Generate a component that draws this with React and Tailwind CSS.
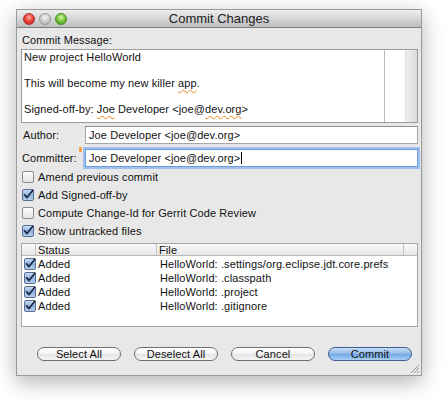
import React from "react";

function Check({ checked }) {
  return (
    <svg width="12" height="12" viewBox="0 0 12 12" className="shrink-0">
      <defs>
        <linearGradient id="cbw" x1="0" y1="0" x2="0" y2="1">
          <stop offset="0" stopColor="#ffffff" />
          <stop offset="1" stopColor="#e4e4e4" />
        </linearGradient>
        <linearGradient id="cbb" x1="0" y1="0" x2="0" y2="1">
          <stop offset="0" stopColor="#cfe0f5" />
          <stop offset="0.5" stopColor="#8fb2e0" />
          <stop offset="1" stopColor="#b7d0f0" />
        </linearGradient>
      </defs>
      <rect x="0.5" y="0.5" width="11" height="11" rx="1.5" fill={checked ? "url(#cbb)" : "url(#cbw)"} stroke={checked ? "#5a6f8e" : "#8a8a8a"} />
      {checked && (
        <path d="M2.6 5.8 L5 8.6 L10.8 1.2" fill="none" stroke="#1b2740" strokeWidth="1.7" strokeLinecap="round" strokeLinejoin="round" />
      )}
    </svg>
  );
}

function Button({ children, primary }) {
  return (
    <div
      className={
        "w-[84px] h-[14px] rounded-full border flex items-center justify-center text-[11px] leading-none text-[#111] " +
        (primary
          ? "border-[#3f5f93] bg-[linear-gradient(to_bottom,#c9def6_0%,#8db8ea_50%,#6fa5e4_51%,#a9d0f6_100%)]"
          : "border-[#6e6e6e] bg-[linear-gradient(to_bottom,#ffffff_0%,#f3f3f3_50%,#e4e4e4_51%,#f6f6f6_100%)]")
      }
    >
      {children}
    </div>
  );
}

export default function App() {
  const rows = [
    "HelloWorld: .settings/org.eclipse.jdt.core.prefs",
    "HelloWorld: .classpath",
    "HelloWorld: .project",
    "HelloWorld: .gitignore",
  ];
  const squig = "underline decoration-wavy decoration-[#e8851c] decoration-1 underline-offset-2";
  return (
    <div className="w-[446px] h-[401px] bg-white pt-[9px] pl-[16px] font-['Liberation_Sans',Arial,sans-serif] text-[11px] text-[#111] tracking-[0.1px]">
      <div className="w-[406px] h-[367px] bg-[#e8e8e8] flex flex-col shadow-[0_6px_20px_rgba(0,0,0,0.3)] border border-[#9a9a9a] relative">
        {/* title bar */}
        <div className="h-[18px] shrink-0 relative flex items-center justify-center bg-[linear-gradient(to_bottom,#eeeeee_0%,#d6d6d6_50%,#bdbdbd_100%)] border-b border-[#7e7e7e]">
          <div className="absolute left-[6px] top-[3px] flex gap-[4px]">
            <span className="w-[12px] h-[12px] rounded-full border border-[#a33] bg-[radial-gradient(circle_at_50%_35%,#ffb0a8_0%,#f0463c_45%,#b81c18_100%)]" />
            <span className="w-[12px] h-[12px] rounded-full border border-[#9a9a9a] bg-[radial-gradient(circle_at_50%_35%,#f4f4f4_0%,#cfcfcf_50%,#a8a8a8_100%)]" />
            <span className="w-[12px] h-[12px] rounded-full border border-[#4d8a2a] bg-[radial-gradient(circle_at_50%_35%,#d8f5b0_0%,#7ccb3c_45%,#3f8a18_100%)]" />
          </div>
          <span className="text-[13px] text-[#222] leading-none tracking-normal">Commit Changes</span>
        </div>

        <div className="flex-1 flex flex-col pl-[4px] pr-[3px]">
          <div className="h-[21px] flex items-center pl-[1px] pt-[3px]">Commit Message:</div>
          {/* text area */}
          <div className="h-[74px] bg-white border border-[#9c9c9c] flex">
            <div className="flex-1 pl-[2px] pt-[1px] leading-[13px]">
              <div>New project HelloWorld</div>
              <div>&nbsp;</div>
              <div>This will become my new killer <span className={squig}>app</span>.</div>
              <div>&nbsp;</div>
              <div>
                Signed-off-by: <span className={squig}>Joe</span> Developer &lt;joe@<span className={squig}>dev.org</span>&gt;
              </div>
            </div>
            <div className="w-[33px] border-l border-[#bdbdbd] flex justify-end">
              <div className="w-[12px] h-full bg-[linear-gradient(to_right,#eeeeee,#dcdcdc)] border-l border-[#e0e0e0]" />
            </div>
          </div>

          {/* author */}
          <div className="mt-[3px] flex items-center h-[18px]">
            <div className="w-[64px] pl-[2px]">Author:</div>
            <div className="flex-1 h-[18px] bg-white border border-[#a6a6a6] border-t-[#8c8c8c] flex items-center pl-[3px]">
              Joe Developer &lt;joe@dev.org&gt;
            </div>
          </div>
          <div className="mt-[5px] flex items-center h-[18px]">
            <div className="w-[64px] pl-[1px] relative">
              Committer:
              <span className="absolute left-[58px] -top-[3px] w-[3px] h-[5px] bg-[#f0a040] rounded-[1px]" />
            </div>
            <div className="flex-1 h-[18px] bg-white border border-[#6f9bd8] shadow-[0_0_0_2px_#9dc1ee] flex items-center pl-[3px]">
              Joe Developer &lt;joe@dev.org&gt;<span className="inline-block w-px h-[12px] bg-black ml-[1px]" />
            </div>
          </div>

          {/* checkboxes */}
          <div className="mt-[1px] flex flex-col pl-[1px]">
            {[
              ["Amend previous commit", false],
              ["Add Signed-off-by", true],
              ["Compute Change-Id for Gerrit Code Review", false],
              ["Show untracked files", true],
            ].map(([t, c]) => (
              <div key={t} className="h-[18px] flex items-center gap-[4px]">
                <Check checked={c} />
                <span>{t}</span>
              </div>
            ))}
          </div>

          {/* table */}
          <div className="mt-[3px] h-[84px] bg-white border border-[#a6a6a6] flex flex-col">
            <div className="h-[12px] flex bg-[linear-gradient(to_bottom,#fafafa,#e6e6e6)] border-b border-[#b8b8b8] leading-[12px]">
              <div className="w-[14px] border-r border-[#c4c4c4]" />
              <div className="w-[121px] border-r border-[#c4c4c4] pl-[2px]">Status</div>
              <div className="w-[247px] border-r border-[#c4c4c4] pl-[2px]">File</div>
              <div className="flex-1" />
            </div>
            <div className="pt-[1px]">
              {rows.map((f) => (
                <div key={f} className="h-[14px] flex items-center">
                  <div className="w-[15px] pl-[2px] flex items-center">
                    <Check checked />
                  </div>
                  <div className="w-[121px] pl-[1px]">Added</div>
                  <div className="pl-[2px]">{f}</div>
                </div>
              ))}
            </div>
          </div>

          {/* buttons */}
          <div className="mt-[20px] flex pl-[16px] gap-[13px]">
            <Button>Select All</Button>
            <Button>Deselect All</Button>
            <Button>Cancel</Button>
            <Button primary>Commit</Button>
          </div>
        </div>
        <svg className="absolute right-[1px] bottom-[1px]" width="11" height="11" viewBox="0 0 11 11">
          <path d="M10 2 L2 10 M10 5 L5 10 M10 8 L8 10" stroke="#9a9a9a" strokeWidth="1" />
        </svg>
      </div>
    </div>
  );
}
